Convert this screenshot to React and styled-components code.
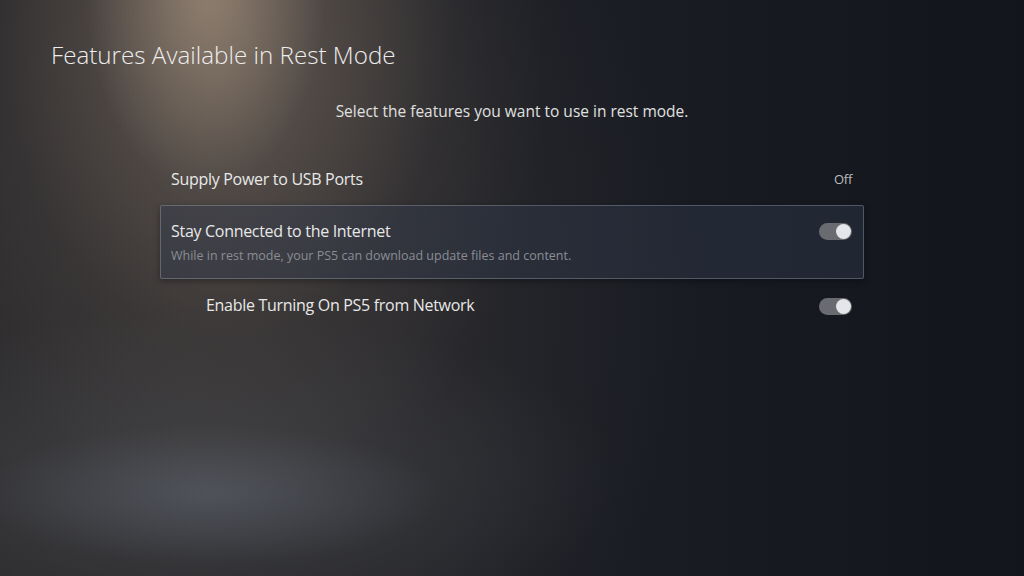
import styled, { createGlobalStyle } from 'styled-components';

const GlobalStyle = createGlobalStyle`
    html, body {
        margin: 0;
        padding: 0;
        background: #14171e;
    }
    * {
        box-sizing: border-box;
    }
`;

const settings = [
    { id: 'usb', label: 'Supply Power to USB Ports', value: 'Off' },
    {
        id: 'internet',
        label: 'Stay Connected to the Internet',
        description: 'While in rest mode, your PS5 can download update files and content.',
        toggle: true,
        selected: true,
    },
    { id: 'network', label: 'Enable Turning On PS5 from Network', toggle: true, nested: true },
];

export default function App(){
    return (
        <>
            <GlobalStyle />
            <Screen>
                <Title>Features Available in Rest Mode</Title>
                <Subtitle>Select the features you want to use in rest mode.</Subtitle>

                <List>
                    {settings.map((item) => {
                        return (
                            <Row key={item.id} $selected={item.selected} $nested={item.nested}>
                                <Texts>
                                    <Label>{item.label}</Label>
                                    {item.description && <Description>{item.description}</Description>}
                                </Texts>
                                {item.toggle ? <Toggle $on /> : <Value>{item.value}</Value>}
                            </Row>
                        )
                    })}
                </List>
            </Screen>
        </>
    )
}

const Screen = styled.div`
    width: 1024px;
    height: 576px;
    overflow: hidden;
    padding-top: 40px;
    font-family: "Open Sans", "Noto Sans", sans-serif;
    color: #e6e6e6;
    background:
        radial-gradient(ellipse 120px 200px at 205px -10px, rgba(200, 175, 150, 0.45), transparent 100%),
        radial-gradient(ellipse 230px 340px at 225px 0px, rgba(165, 145, 125, 0.32), transparent 100%),
        radial-gradient(ellipse 320px 430px at 225px 80px, rgba(110, 98, 88, 0.4), transparent 100%),
        radial-gradient(ellipse 230px 70px at 210px 495px, rgba(100, 106, 118, 0.45), transparent 100%),
        radial-gradient(ellipse 420px 170px at 200px 480px, rgba(85, 88, 92, 0.45), transparent 100%),
        radial-gradient(ellipse 520px 520px at 180px 300px, rgba(60, 56, 56, 0.55), transparent 100%),
        linear-gradient(90deg, #262629 0%, #222328 40%, #181b22 68%, #12151c 100%);
`;

const Title = styled.h1`
    margin: 0;
    padding-left: 51px;
    font-size: 24.2px;
    line-height: 30px;
    font-weight: 300;
    color: #ededed;
`;

const Subtitle = styled.p`
    margin: 30px 0 0;
    text-align: center;
    font-size: 15.5px;
    line-height: 22px;
    color: #e0e0e0;
`;

const List = styled.div`
    width: 704px;
    margin: 31px auto 0;
    display: flex;
    flex-direction: column;
`;

const Row = styled.div`
    display: flex;
    justify-content: space-between;
    align-items: ${({ $selected }) => ($selected ? 'flex-start' : 'center')};
    height: ${({ $selected }) => ($selected ? '74px' : '52px')};
    padding: ${({ $selected }) => ($selected ? '14px' : '0')} 11px 0 ${({ $nested }) => ($nested ? '45px' : '10px')};
    border: 1px solid ${({ $selected }) => ($selected ? 'rgba(190, 200, 215, 0.3)' : 'transparent')};
    border-radius: 2px;
    background: ${({ $selected }) => ($selected ? 'rgba(50, 60, 78, 0.42)' : 'transparent')};
    box-shadow: ${({ $selected }) => ($selected ? '0 2px 6px rgba(0, 0, 0, 0.35)' : 'none')};
`;

const Texts = styled.div`
    display: flex;
    flex-direction: column;
`;

const Label = styled.span`
    font-size: 16px;
    line-height: 22px;
    letter-spacing: -0.3px;
    color: #e8e8e8;
`;

const Description = styled.span`
    margin-top: 6px;
    font-size: 12.5px;
    line-height: 16px;
    color: #8a8d94;
`;

const Value = styled.span`
    font-size: 13px;
    letter-spacing: -0.3px;
    color: #bdbdbd;
`;

const Toggle = styled.span`
    position: relative;
    display: inline-block;
    width: 33px;
    height: 17px;
    margin-top: ${({ $on }) => ($on ? '3px' : '0')};
    border-radius: 9px;
    background: #6a6b70;

    &::after{
        content: '';
        position: absolute;
        top: 1px;
        right: 1px;
        width: 15px;
        height: 15px;
        border-radius: 50%;
        background: #e4e6ea;
    }
`;
